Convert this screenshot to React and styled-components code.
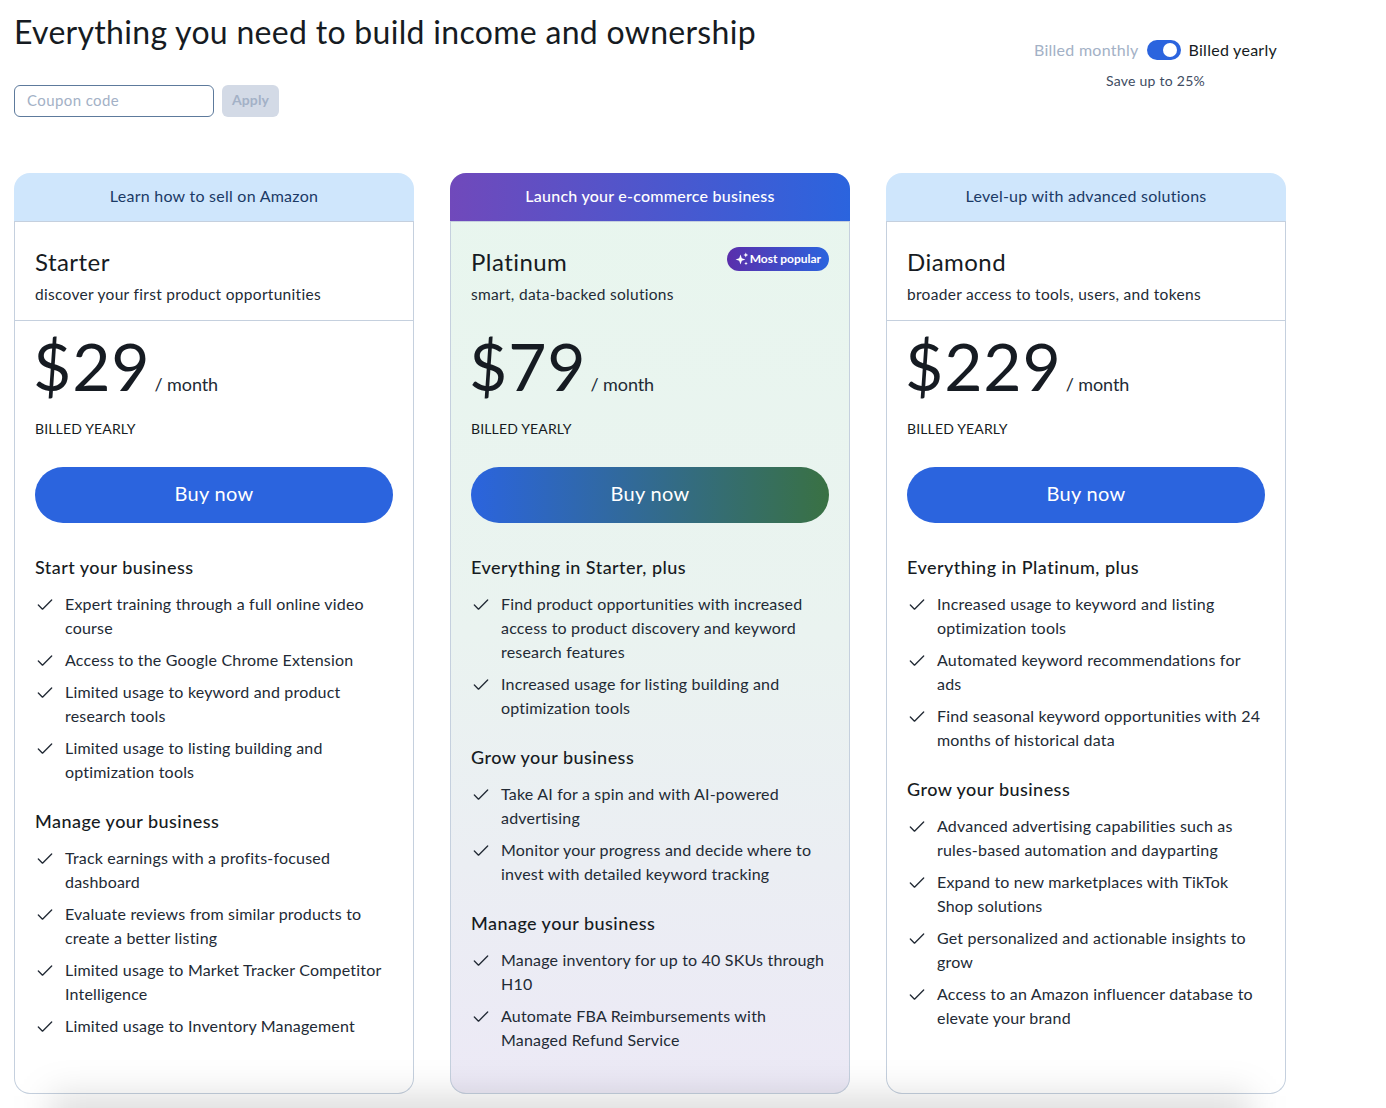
import React from 'react';
import styled, { createGlobalStyle } from 'styled-components';
import { Check } from 'lucide-react';

const GlobalStyle = createGlobalStyle`
  html, body {
    margin: 0;
    padding: 0;
    background: #fff;
    font-family: 'Lato', 'Open Sans', sans-serif;
    color: #161b22;
  }
  * { box-sizing: border-box; }
`;

const Page = styled.div`
  position: relative;
  width: 1386px;
  height: 1108px;
  overflow: hidden;
  padding: 0 14px;
`;

const TopBar = styled.div`
  display: flex;
  justify-content: space-between;
  height: 173px;
`;

const Title = styled.h1`
  margin: 12px 0 0;
  font-size: 32px;
  line-height: 40px;
  font-weight: 400;
  letter-spacing: 0.3px;
  color: #161b22;
`;

const CouponRow = styled.div`
  display: flex;
  gap: 8px;
  margin-top: 33px;
`;

const CouponInput = styled.input`
  width: 200px;
  height: 32px;
  border: 1px solid #5d7a9c;
  border-radius: 6px;
  padding: 0 12px 2px;
  font: 400 15px 'Lato', sans-serif;
  letter-spacing: 0.4px;
  outline: none;
  &::placeholder { color: #a3b1c6; opacity: 1; }
`;

const ApplyButton = styled.button`
  width: 57px;
  height: 32px;
  padding: 0 0 3px;
  border: 0;
  border-radius: 6px;
  background: #d3dae6;
  color: #a3b1c6;
  font: 700 14px 'Lato', sans-serif;
  letter-spacing: 0.1px;
`;

const Billing = styled.div`
  width: 245px;
  margin-right: 94px;
  padding-top: 39px;
  display: flex;
  flex-direction: column;
  align-items: center;
`;

const BillingRow = styled.div`
  display: flex;
  align-items: center;
  gap: 8px;
  font-size: 16px;
  line-height: 22px;
  letter-spacing: 0.27px;
`;

const BillingLabel = styled.span`
  color: ${(props) => (props.active ? '#161b22' : '#a3b1c6')};
`;

const Toggle = styled.span`
  display: flex;
  justify-content: flex-end;
  align-items: center;
  width: 34px;
  height: 20px;
  padding: 3px 4px;
  border-radius: 10px;
  background: #2b64de;
  &::after {
    content: '';
    width: 14px;
    height: 14px;
    border-radius: 50%;
    background: #fff;
  }
`;

const SaveNote = styled.div`
  margin-top: 10px;
  font-size: 14px;
  line-height: 20px;
  letter-spacing: 0.25px;
  color: #3e4c62;
`;

const Cards = styled.div`
  display: flex;
  gap: 36px;
`;

const Card = styled.article`
  width: 400px;
  height: 921px;
  display: flex;
  flex-direction: column;
  border-radius: 16px;
  background: ${(props) =>
    props.featured ? 'linear-gradient(180deg, #e8f6ee 0%, #eaf3f0 50%, #ece9f6 100%)' : '#fff'};
`;

const Banner = styled.div`
  height: 49px;
  padding-bottom: 3px;
  border-radius: 16px 16px 0 0;
  border-bottom: 1px solid #c5d0de;
  display: flex;
  align-items: center;
  justify-content: center;
  font-size: 16px;
  letter-spacing: 0.25px;
  font-weight: ${(props) => (props.featured ? 500 : 400)};
  color: ${(props) => (props.featured ? '#fff' : '#1b3a66')};
  background: ${(props) =>
    props.featured ? 'linear-gradient(90deg, #7049bb 0%, #2b64de 100%)' : '#cfe6fc'};
`;

const CardFrame = styled.div`
  flex: 1;
  display: flex;
  flex-direction: column;
  border: 1px solid #c5d0de;
  border-top: 0;
  border-radius: 0 0 16px 16px;
`;

const PlanHead = styled.header`
  position: relative;
  height: 99px;
  padding: 24px 20px 0;
  border-bottom: ${(props) => (props.featured ? '0' : '1px solid #c5d0de')};
`;

const PlanName = styled.h2`
  margin: 0;
  font-size: 24px;
  line-height: 32px;
  font-weight: 400;
  letter-spacing: 0.45px;
`;

const PlanTag = styled.p`
  margin: 4px 0 0;
  font-size: 15.5px;
  line-height: 24px;
  letter-spacing: 0.3px;
  color: #222a35;
`;

const Badge = styled.span`
  position: absolute;
  top: 25px;
  right: 20px;
  height: 24px;
  padding: 0 8px 1px;
  display: flex;
  align-items: center;
  gap: 1px;
  border-radius: 12px;
  color: #fff;
  font-size: 12px;
  font-weight: 700;
  letter-spacing: -0.02px;
  background: linear-gradient(90deg, #5a2eab 0%, #2b64de 100%);
`;

const PlanBody = styled.div`
  padding: 0 20px;
`;

const PriceRow = styled.div`
  display: flex;
  align-items: baseline;
  gap: 4px;
  height: 92px;
  padding-top: 3px;
`;

const Price = styled.span`
  margin-left: -2px;
  font-size: 66px;
  line-height: 84px;
  letter-spacing: 0.9px;
`;

const Per = styled.span`
  font-size: 18px;
  letter-spacing: -0.1px;
  color: #222a35;
`;

const BilledNote = styled.div`
  margin-top: 6px;
  font-size: 14px;
  line-height: 20px;
  letter-spacing: 0.15px;
  color: #161b22;
`;

const BuyButton = styled.button`
  display: block;
  width: 358px;
  height: 56px;
  margin-top: 28px;
  padding: 0 0 4px;
  border: 0;
  border-radius: 28px;
  color: #fff;
  font: 400 20px 'Lato', sans-serif;
  letter-spacing: 0.3px;
  background: ${(props) =>
    props.featured ? 'linear-gradient(90deg, #2b64de 0%, #397143 100%)' : '#2b64de'};
`;

const Section = styled.section`
  margin-top: 32px;
  & + & { margin-top: 25px; }
`;

const SectionTitle = styled.h3`
  margin: 0 0 13px;
  font-size: 18px;
  line-height: 24px;
  font-weight: 500;
  letter-spacing: 0.45px;
`;

const FeatureList = styled.ul`
  list-style: none;
  margin: 0;
  padding: 0;
  display: flex;
  flex-direction: column;
  gap: 8px;
`;

const Feature = styled.li`
  display: flex;
  gap: 10px;
  font-size: 16px;
  line-height: 24px;
  letter-spacing: 0.19px;
  color: #222a35;
  svg { flex: none; margin-top: 3px; }
`;

// soft grey glow that sits over the lower edge of the cards
const BottomShadow = styled.div`
  position: absolute;
  left: 50px;
  top: 1096px;
  width: 1200px;
  height: 44px;
  background: rgba(0, 0, 0, 0.14);
  filter: blur(18px);
  pointer-events: none;
`;

const Sparkles = () => (
  <svg width="14" height="14" viewBox="0 0 14 14" fill="#fff">
    <path d="M5.5 2.6 6.8 6.2 10.4 7.5 6.8 8.8 5.5 12.4 4.2 8.8 .6 7.5 4.2 6.2Z" />
    <path d="M10.8 .6l.7 1.7 1.7.7-1.7.7-.7 1.7-.7-1.7-1.7-.7 1.7-.7Z" />
    <path d="M11 9.6l.5 1.3 1.3.5-1.3.5-.5 1.3-.5-1.3-1.3-.5 1.3-.5Z" />
  </svg>
);

const plans = [
  {
    banner: 'Learn how to sell on Amazon',
    name: 'Starter',
    tag: 'discover your first product opportunities',
    price: '$29',
    sections: [
      {
        title: 'Start your business',
        items: [
          'Expert training through a full online video course',
          'Access to the Google Chrome Extension',
          'Limited usage to keyword and product research tools',
          'Limited usage to listing building and optimization tools',
        ],
      },
      {
        title: 'Manage your business',
        items: [
          'Track earnings with a profits-focused dashboard',
          'Evaluate reviews from similar products to create a better listing',
          'Limited usage to Market Tracker Competitor Intelligence',
          'Limited usage to Inventory Management',
        ],
      },
    ],
  },
  {
    featured: true,
    banner: 'Launch your e-commerce business',
    name: 'Platinum',
    tag: 'smart, data-backed solutions',
    price: '$79',
    sections: [
      {
        title: 'Everything in Starter, plus',
        items: [
          'Find product opportunities with increased access to product discovery and keyword research features',
          'Increased usage for listing building and optimization tools',
        ],
      },
      {
        title: 'Grow your business',
        items: [
          'Take AI for a spin and with AI-powered advertising',
          'Monitor your progress and decide where to invest with detailed keyword tracking',
        ],
      },
      {
        title: 'Manage your business',
        items: [
          'Manage inventory for up to 40 SKUs through H10',
          'Automate FBA Reimbursements with Managed Refund Service',
        ],
      },
    ],
  },
  {
    banner: 'Level-up with advanced solutions',
    name: 'Diamond',
    tag: 'broader access to tools, users, and tokens',
    price: '$229',
    sections: [
      {
        title: 'Everything in Platinum, plus',
        items: [
          'Increased usage to keyword and listing optimization tools',
          'Automated keyword recommendations for ads',
          'Find seasonal keyword opportunities with 24 months of historical data',
        ],
      },
      {
        title: 'Grow your business',
        items: [
          'Advanced advertising capabilities such as rules-based automation and dayparting',
          'Expand to new marketplaces with TikTok Shop solutions',
          'Get personalized and actionable insights to grow',
          'Access to an Amazon influencer database to elevate your brand',
        ],
      },
    ],
  },
];

const App = () => (
  <Page>
    <GlobalStyle />
    <TopBar>
      <div>
        <Title>Everything you need to build income and ownership</Title>
        <CouponRow>
          <CouponInput placeholder="Coupon code" />
          <ApplyButton>Apply</ApplyButton>
        </CouponRow>
      </div>
      <Billing>
        <BillingRow>
          <BillingLabel>Billed monthly</BillingLabel>
          <Toggle />
          <BillingLabel active>Billed yearly</BillingLabel>
        </BillingRow>
        <SaveNote>Save up to 25%</SaveNote>
      </Billing>
    </TopBar>
    <Cards>
      {plans.map((plan) => (
        <Card key={plan.name} featured={plan.featured}>
          <Banner featured={plan.featured}>{plan.banner}</Banner>
          <CardFrame>
            <PlanHead featured={plan.featured}>
              <PlanName>{plan.name}</PlanName>
              <PlanTag>{plan.tag}</PlanTag>
              {plan.featured && (
                <Badge>
                  <Sparkles />
                  Most popular
                </Badge>
              )}
            </PlanHead>
            <PlanBody>
              <PriceRow>
                <Price>{plan.price}</Price>
                <Per>/ month</Per>
              </PriceRow>
              <BilledNote>BILLED YEARLY</BilledNote>
              <BuyButton featured={plan.featured}>Buy now</BuyButton>
              {plan.sections.map((section) => (
                <Section key={section.title}>
                  <SectionTitle>{section.title}</SectionTitle>
                  <FeatureList>
                    {section.items.map((item) => (
                      <Feature key={item}>
                        <Check size={20} strokeWidth={1.6} />
                        <span>{item}</span>
                      </Feature>
                    ))}
                  </FeatureList>
                </Section>
              ))}
            </PlanBody>
          </CardFrame>
        </Card>
      ))}
    </Cards>
    <BottomShadow />
  </Page>
);

export default App;
